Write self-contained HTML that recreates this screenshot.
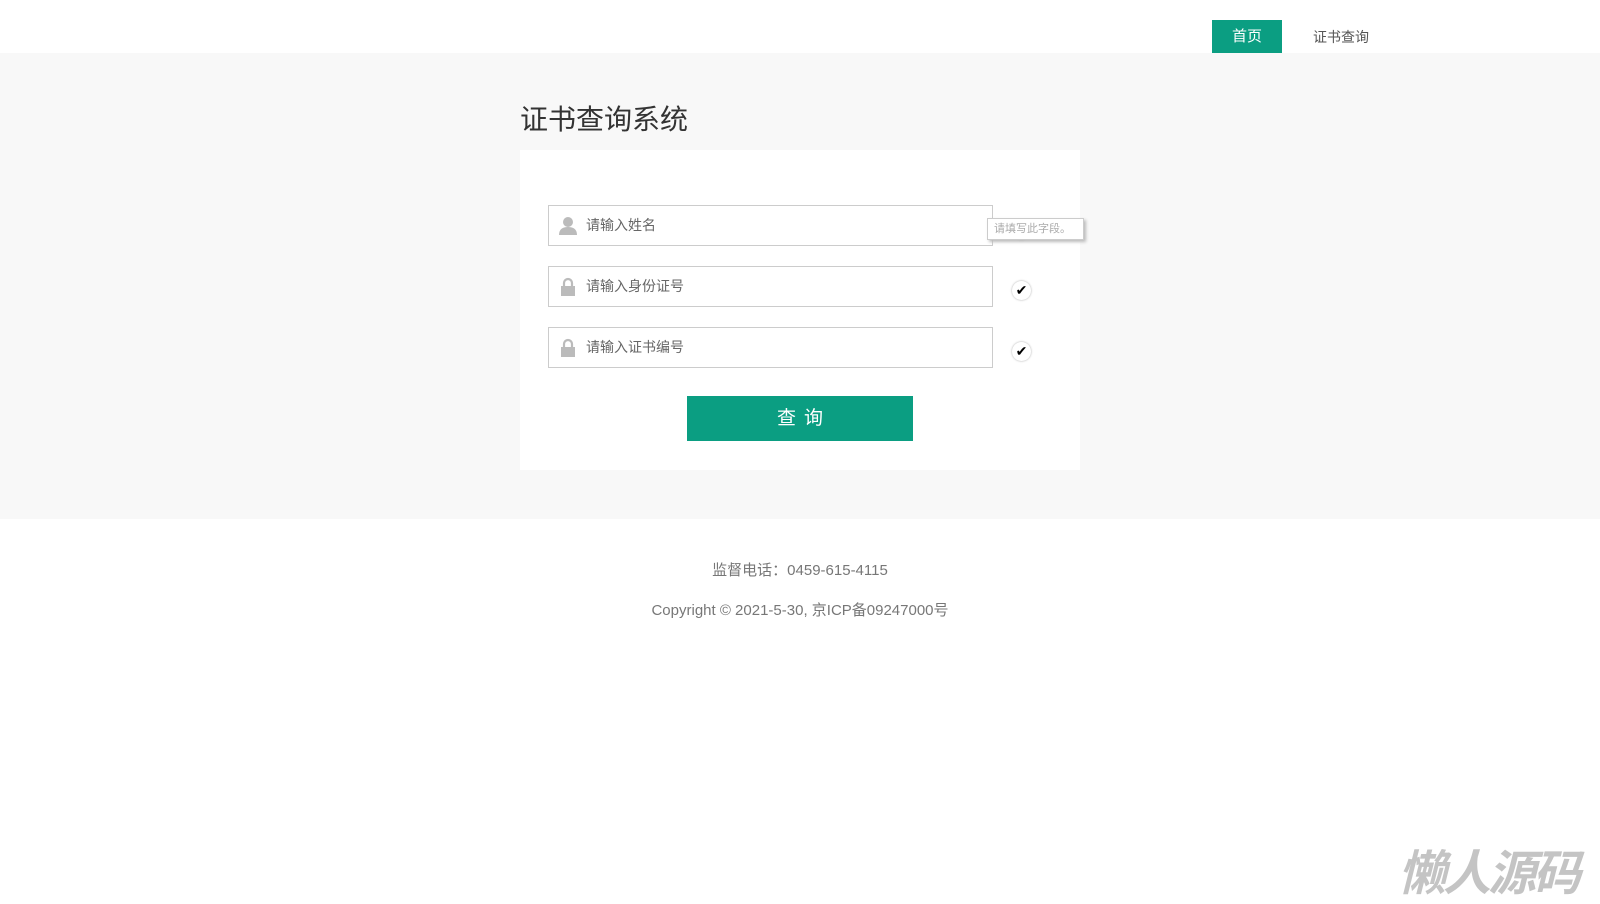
<!DOCTYPE html>
<html><head><meta charset="utf-8"><style>
*{margin:0;padding:0;box-sizing:border-box}
body{width:1600px;height:900px;background:#fff;font-family:"Liberation Sans","Noto Sans CJK SC",sans-serif;position:relative;overflow:hidden}
.hdr{height:53px;background:#fff;position:relative}
.nav1{position:absolute;left:1212px;top:20px;width:70px;height:33px;background:#0b9e82;color:#fff;font-size:15px;text-align:center;line-height:33px}
.nav2{position:absolute;left:1313px;top:21px;line-height:33px;font-size:14px;color:#555}
.main{position:absolute;top:53px;left:0;width:1600px;height:466px;background:#f8f8f8}
.title{position:absolute;left:520px;top:98px;font-size:28px;color:#333}
.card{position:absolute;left:520px;top:150px;width:560px;height:320px;background:#fff}
.inp{position:absolute;left:548px;width:445px;height:41px;border:1px solid #ccc;background:#fff;font-size:14px;color:#666;line-height:39px;padding-left:37px}
.ic{position:absolute;left:9px;top:10px}
.chk{position:absolute;left:1012px;width:19px;height:19px;border-radius:50%;background:#fff;box-shadow:0 0 2px #aaa;font-size:14px;text-align:center;line-height:19px;color:#000}
.tip{position:absolute;left:987px;top:218px;width:97px;height:22px;border:1px solid #ccc;box-shadow:2px 2px 3px #bbb;background:#fff;font-size:11px;color:#aaa;line-height:20px;padding-left:6px}
.btn{position:absolute;left:687px;top:396px;width:226px;height:45px;background:#0b9e82;color:#fff;font-size:19px;text-align:center;line-height:45px;letter-spacing:8px;text-indent:8px}
.f{position:absolute;left:0;width:1600px;text-align:center;font-size:15px;color:#777}
.wm{position:absolute;left:1398px;top:834px;font-size:48px;font-weight:bold;font-style:italic;color:#c4c4c4;letter-spacing:-3px}
</style></head><body>
<div class="hdr"><div class="nav1">首页</div><div class="nav2">证书查询</div></div>
<div class="main"></div>
<div class="title">证书查询系统</div>
<div class="card"></div>
<div class="inp" style="top:205px"><svg class="ic" width="20" height="20" viewBox="0 0 20 20"><circle cx="10" cy="6" r="5" fill="#bbb"/><path d="M1 19 Q1 11 10 11 Q19 11 19 19Z" fill="#bbb"/></svg>请输入姓名</div>
<div class="inp" style="top:266px"><svg class="ic" width="20" height="20" viewBox="0 0 20 20"><path d="M6 9V6a4 4 0 0 1 8 0v3" stroke="#bbb" stroke-width="2.2" fill="none"/><rect x="3" y="9" width="14" height="10" fill="#bbb"/></svg>请输入身份证号</div>
<div class="inp" style="top:327px"><svg class="ic" width="20" height="20" viewBox="0 0 20 20"><path d="M6 9V6a4 4 0 0 1 8 0v3" stroke="#bbb" stroke-width="2.2" fill="none"/><rect x="3" y="9" width="14" height="10" fill="#bbb"/></svg>请输入证书编号</div>
<div class="chk" style="top:221px">✔</div>
<div class="tip">请填写此字段。</div>
<div class="chk" style="top:281px">✔</div>
<div class="chk" style="top:342px">✔</div>
<div class="btn">查询</div>
<div class="f" style="top:559px">监督电话：0459-615-4115</div>
<div class="f" style="top:599px">Copyright © 2021-5-30, 京ICP备09247000号</div>
<div class="wm">懒人源码</div>
</body></html>
